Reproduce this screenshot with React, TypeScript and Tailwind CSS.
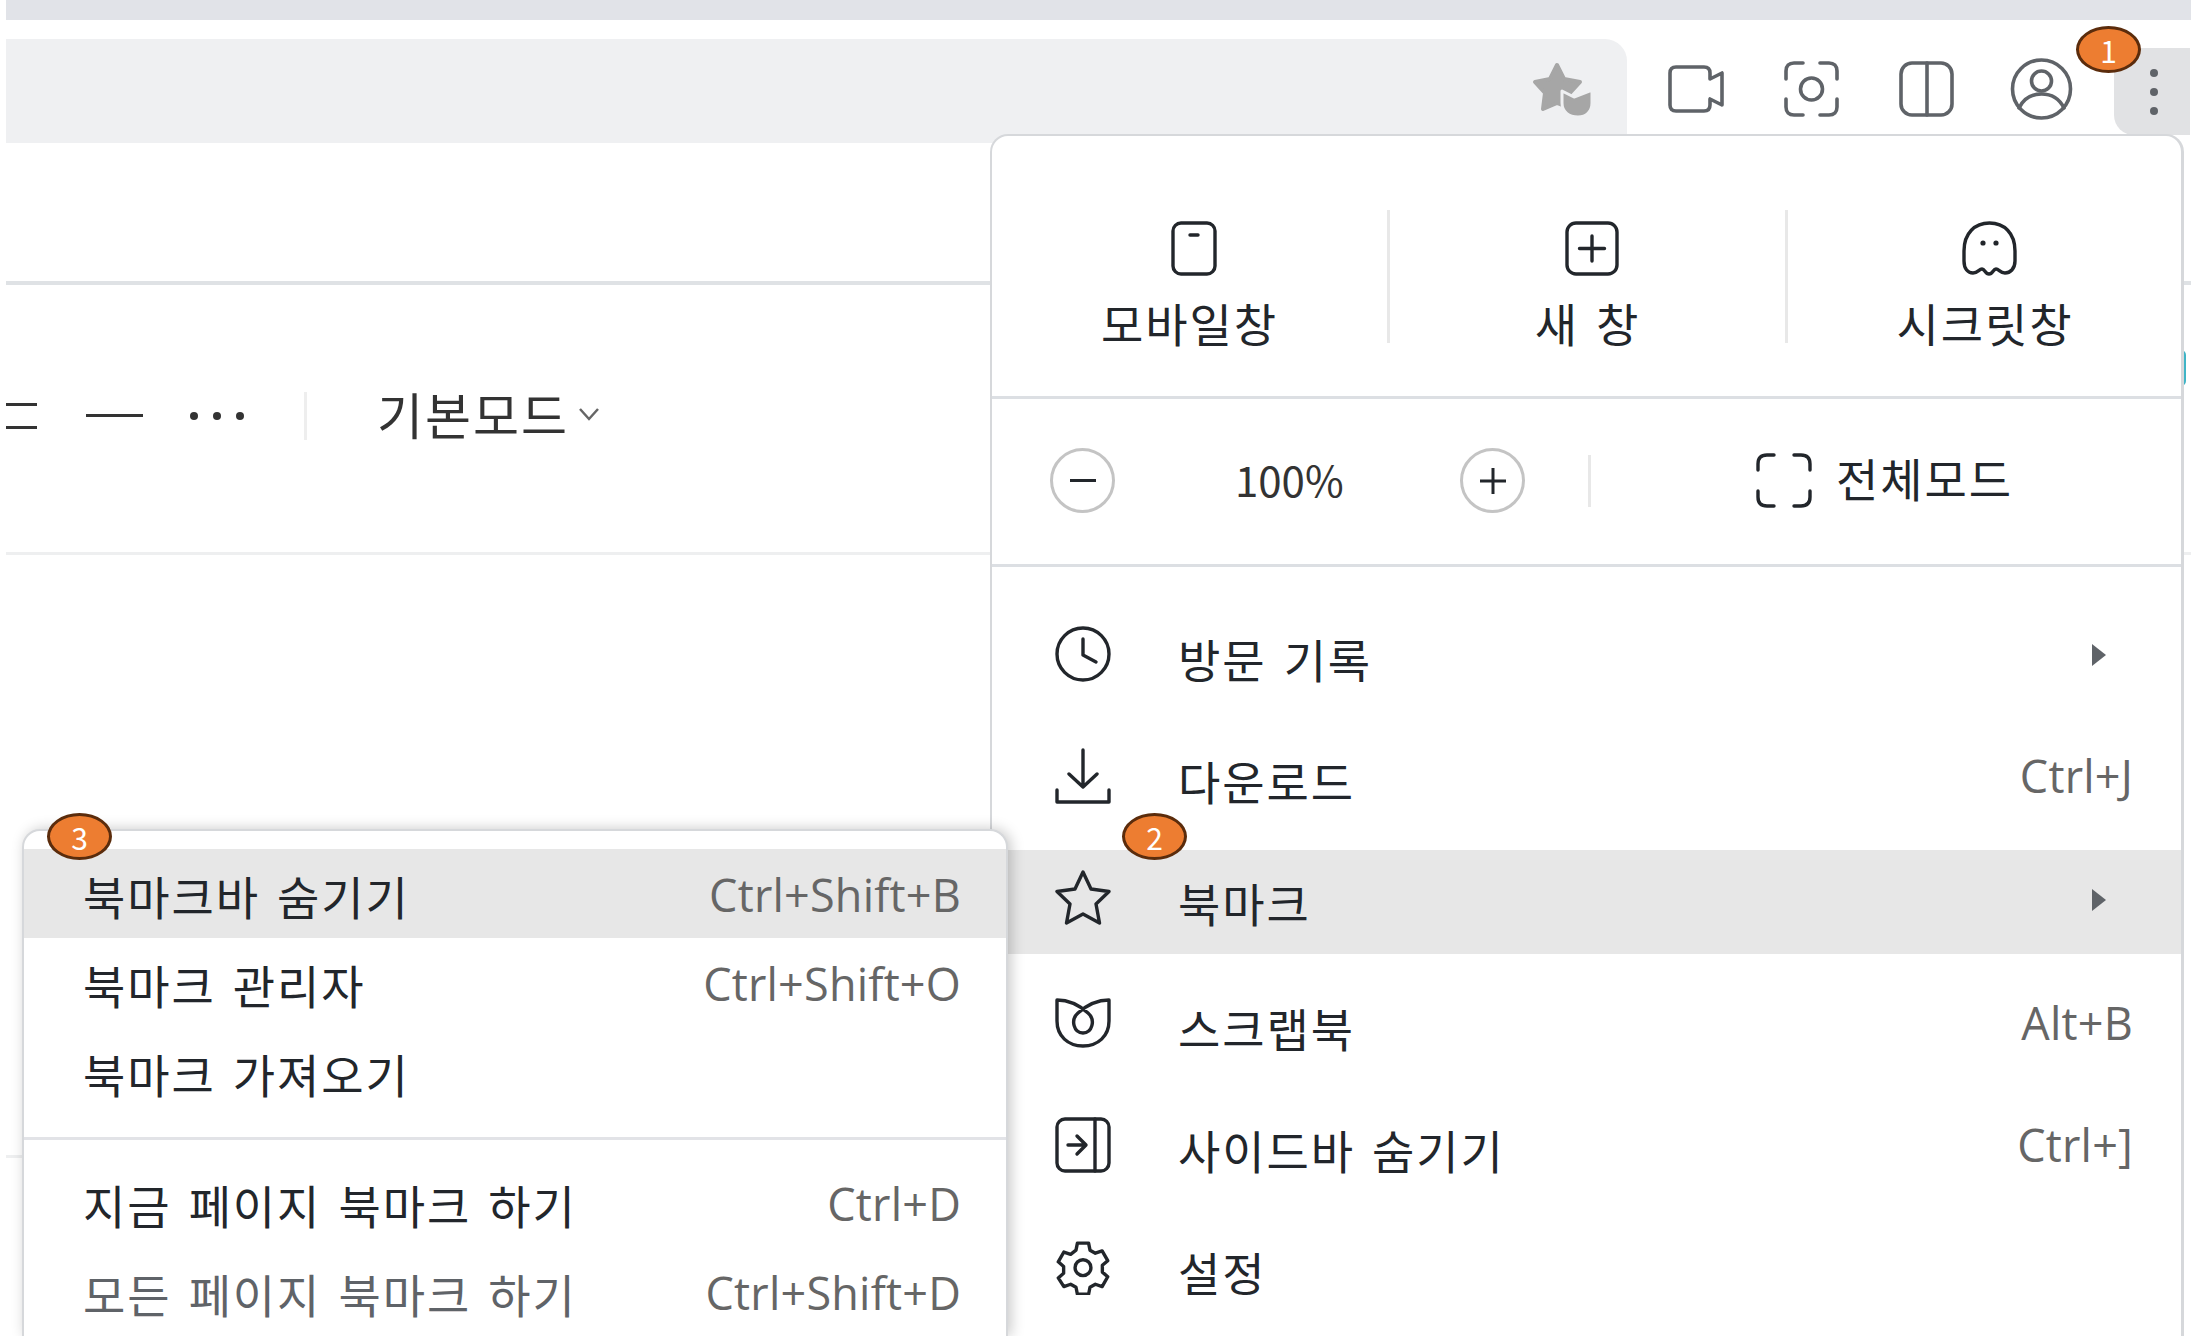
const fontKr = "font-['Noto_Sans_CJK_KR','Noto_Sans',sans-serif]";

// Hangul in the picture runs wider than Noto, so it gets a bit of tracking
const krText = "text-[46px] leading-none tracking-[1.9px] [word-spacing:5px]";
const shortcutText = "font-['Open_Sans'] text-[45px] leading-none tracking-[0.2px] text-[#666]";

const Badge = ({ label, className }: { label: string; className: string }) => (
  <div
    className={`absolute z-30 flex h-[47px] w-[65px] items-center justify-center rounded-[50%] border-[3px] border-[#5b2c0c] bg-[#ed7d31] text-[30px] leading-none text-white ${className}`}
  >
    {label}
  </div>
);

const Arrow = () => (
  <svg width="14" height="22" viewBox="0 0 14 22">
    <path d="M0 0 L14 11 L0 22 Z" fill="#5f6368" />
  </svg>
);

const stroke = {
  fill: "none",
  stroke: "#22262b",
  strokeWidth: 3.4,
  strokeLinecap: "round" as const,
  strokeLinejoin: "round" as const,
};

const toolStroke = { ...stroke, stroke: "#5f6368", strokeWidth: 3.6 };

const StarShield = () => (
  <svg width="62" height="56" viewBox="0 0 62 56">
    <path
      d="M25 3 L32 17 L48 20 L37 32 L38 46 L25 41 L11 47 L13 31 L3 20 L18 17 Z"
      fill="#a6a6a6"
      stroke="#a6a6a6"
      strokeWidth="4"
      strokeLinejoin="round"
    />
    <path
      d="M30 29 L42 35 L60 28 L60 41 C60 50 54 55 46 55 C37 55 30 50 30 41 Z"
      fill="#a6a6a6"
      stroke="#eff0f2"
      strokeWidth="3"
      strokeLinejoin="round"
    />
  </svg>
);

const VideoIcon = () => (
  <svg width="56" height="48" viewBox="0 0 56 48">
    <path
      {...toolStroke}
      d="M8 2 H36 C40 2 42 4 42 8 V14 L54 8 V40 L42 34 V40 C42 44 40 46 36 46 H8 C4 46 2 44 2 40 V8 C2 4 4 2 8 2 Z"
    />
  </svg>
);

const CaptureIcon = () => (
  <svg width="55" height="56" viewBox="0 0 55 56">
    <path
      {...toolStroke}
      d="M2 18 V10 C2 5 5 2 10 2 H19 M36 2 H45 C50 2 53 5 53 10 V18 M53 38 V46 C53 51 50 54 45 54 H36 M19 54 H10 C5 54 2 51 2 46 V38"
    />
    <circle {...toolStroke} cx="27.5" cy="28" r="11" />
  </svg>
);

const SplitIcon = () => (
  <svg width="55" height="56" viewBox="0 0 55 56">
    <rect {...toolStroke} x="2" y="2" width="51" height="52" rx="11" />
    <path {...toolStroke} d="M28 2 V54" />
  </svg>
);

const ProfileIcon = () => (
  <svg width="63" height="62" viewBox="0 0 63 62">
    <circle {...toolStroke} cx="31.5" cy="31" r="29" />
    <circle {...toolStroke} cx="31.5" cy="23" r="10" />
    <path {...toolStroke} d="M9 50 C14 40 22 36 31.5 36 C41 36 49 40 54 50" />
  </svg>
);

const MobileIcon = () => (
  <svg width="46" height="55" viewBox="0 0 46 55">
    <rect {...stroke} x="2" y="2" width="42" height="51" rx="8" />
    <path {...stroke} d="M19 14 H27" />
  </svg>
);

const NewWindowIcon = () => (
  <svg width="54" height="55" viewBox="0 0 54 55">
    <rect {...stroke} x="2" y="2" width="50" height="51" rx="9" />
    <path {...stroke} d="M27 15 V40 M14.5 27.5 H39.5" />
  </svg>
);

const GhostIcon = () => (
  <svg width="55" height="55" viewBox="0 0 55 55">
    <path
      {...stroke}
      d="M2 30 C2 12 13 2 27.5 2 C42 2 53 12 53 30 V40 C53 48 48 52 43 52 C38 52 37 48 34 48 C31 48 31 53 27 53 C23 53 23 48 20 48 C17 48 16 52 11 52 C6 52 2 48 2 40 Z"
    />
    <circle cx="21" cy="22" r="2.6" fill="#22262b" />
    <circle cx="34" cy="22" r="2.6" fill="#22262b" />
  </svg>
);

const MinusCircle = () => (
  <div className="flex h-[65px] w-[65px] items-center justify-center rounded-full border-[3px] border-[#c4c4c4]">
    <span className="h-[3px] w-[26px] bg-[#22262b]" />
  </div>
);

const PlusCircle = () => (
  <div className="flex h-[65px] w-[65px] items-center justify-center rounded-full border-[3px] border-[#c4c4c4]">
    <svg width="26" height="26" viewBox="0 0 26 26">
      <path d="M13 0 V26 M0 13 H26" stroke="#22262b" strokeWidth="3" />
    </svg>
  </div>
);

const FullscreenIcon = () => (
  <svg width="56" height="55" viewBox="0 0 56 55">
    <path
      {...stroke}
      d="M2 17 V11 C2 5 5 2 11 2 H18 M38 2 H45 C51 2 54 5 54 11 V17 M54 38 V44 C54 50 51 53 45 53 H38 M18 53 H11 C5 53 2 50 2 44 V38"
    />
  </svg>
);

const ClockIcon = () => (
  <svg width="56" height="56" viewBox="0 0 56 56">
    <circle {...stroke} cx="28" cy="28" r="26" />
    <path {...stroke} d="M28 13 V29 L41 36" />
  </svg>
);

const DownloadIcon = () => (
  <svg width="56" height="56" viewBox="0 0 56 56">
    <path {...stroke} d="M28 2 V39 M14 26 L28 39 L42 26 M2 42 V54 H54 V42" />
  </svg>
);

const StarIcon = () => (
  <svg width="56" height="56" viewBox="0 0 56 56">
    <path
      {...stroke}
      d="M28 2 L36 19 L54 21.5 L41 34 L44.5 53 L28 44 L11.5 53 L15 34 L2 21.5 L20 19 Z"
    />
  </svg>
);

const ScrapIcon = () => (
  <svg width="56" height="50" viewBox="0 0 56 50">
    <path
      {...stroke}
      d="M2 2 V23 C2 38 13 48 28 48 C43 48 54 38 54 23 V2 C42 2 33 6 23 15 C15 22 19 35 28 35 C37 35 41 22 33 15 C23 6 14 2 2 2 Z"
    />
  </svg>
);

const SidebarIcon = () => (
  <svg width="56" height="56" viewBox="0 0 56 56">
    <rect {...stroke} x="2" y="2" width="52" height="52" rx="8" />
    <path {...stroke} d="M40 2 V54 M13 28 H30 M22 19 L31 28 L22 37" />
  </svg>
);

const GearIcon = () => (
  <svg width="56" height="57" viewBox="0 0 24 24">
    <path
      fill="none"
      stroke="#22262b"
      strokeWidth="1.45"
      strokeLinejoin="round"
      d="M9.6 2h4.8l.6 3 2.3 1.3 2.9-1 2.4 4.2-2.3 2v2.9l2.3 2-2.4 4.2-2.9-1-2.3 1.3-.6 3H9.6l-.6-3-2.3-1.3-2.9 1L1.400 16.900l2.300-2V12l-2.300-2 2.400-4.200 2.900 1L9 5z"
    />
    <circle cx="12" cy="12.5" r="3.400" fill="none" stroke="#22262b" strokeWidth="1.45" />
  </svg>
);

const menuRows = [
  { icon: <ClockIcon />, label: "방문 기록", arrow: true },
  { icon: <DownloadIcon />, label: "다운로드", shortcut: "Ctrl+J" },
  { icon: <StarIcon />, label: "북마크", arrow: true, active: true },
  { icon: <ScrapIcon />, label: "스크랩북", shortcut: "Alt+B" },
  { icon: <SidebarIcon />, label: "사이드바 숨기기", shortcut: "Ctrl+]" },
  { icon: <GearIcon />, label: "설정" },
];

const MainMenu = () => (
  <div className="absolute top-[134px] left-[990px] z-10 h-[1202px] w-[1194px] overflow-hidden rounded-t-[18px] border-t-2 border-r-[3px] border-l-2 border-[#d6d8db] bg-white text-[#22262b]">
    <div className="grid h-[263px] grid-cols-[395px_398px_397px] border-b-[3px] border-[#dcdfe3] pt-[74px]">
      <div className="flex h-[133px] flex-col items-center pt-[11px]">
        <div className="ml-2">
          <MobileIcon />
        </div>
        <span className={`mt-[23px] ${krText}`}>모바일창</span>
      </div>
      <div className="flex h-[133px] flex-col items-center border-l-[3px] border-[#e8e8e8] pt-[11px]">
        <div className="ml-2">
          <NewWindowIcon />
        </div>
        <span className={`mt-[23px] ${krText}`}>새 창</span>
      </div>
      <div className="flex h-[133px] flex-col items-center border-l-[3px] border-[#e8e8e8] pt-[11px]">
        <div className="ml-2">
          <GhostIcon />
        </div>
        <span className={`mt-[23px] ${krText}`}>시크릿창</span>
      </div>
    </div>
    <div className="flex h-[168px] items-center border-b-[3px] border-[#dcdfe3] pb-[2px] pl-[58px]">
      <MinusCircle />
      <span className="mb-[3px] ml-[120px] w-[109px] text-[42px] leading-none text-[#333]">100%</span>
      <div className="ml-[116px]">
        <PlusCircle />
      </div>
      <span className="ml-[63px] h-[52px] w-[3px] bg-[#e8e8e8]" />
      <div className="ml-[165px] flex items-center">
        <FullscreenIcon />
        <span className={`mb-[7px] ml-[24px] ${krText}`}>전체모드</span>
      </div>
    </div>
    <div className="pt-[18px]">
      {menuRows.map((row) => (
        <div
          key={row.label}
          className={`flex h-[104px] items-center pr-[48px] pl-[63px] ${
            row.active ? "mt-[21px] mb-[15px] bg-[#e7e7e7] pb-[5px]" : "mt-[18px]"
          }`}
        >
          <div className="mb-[3px] flex h-[56px] w-[56px] items-center">{row.icon}</div>
          <span className={`ml-[67px] flex-1 pt-[5px] ${krText}`}>{row.label}</span>
          {row.shortcut && <span className={`mb-[3px] ${shortcutText}`}>{row.shortcut}</span>}
          {row.arrow && (
            <div className="mr-[27px]">
              <Arrow />
            </div>
          )}
        </div>
      ))}
    </div>
  </div>
);

const subRows = [
  { label: "북마크바 숨기기", shortcut: "Ctrl+Shift+B", active: true },
  { label: "북마크 관리자", shortcut: "Ctrl+Shift+O" },
  { label: "북마크 가져오기" },
];

const subRows2 = [
  { label: "지금 페이지 북마크 하기", shortcut: "Ctrl+D" },
  { label: "모든 페이지 북마크 하기", shortcut: "Ctrl+Shift+D", muted: true },
];

const SubRow = ({
  label,
  shortcut,
  active,
  muted,
}: {
  label: string;
  shortcut?: string;
  active?: boolean;
  muted?: boolean;
}) => (
  <div className={`flex h-[89px] items-center pr-[45px] pl-[59px] ${active ? "bg-[#e7e7e7]" : ""}`}>
    <span className={`flex-1 pt-[2px] ${krText} ${muted ? "text-[#5f6368]" : "text-[#22262b]"}`}>{label}</span>
    {shortcut && <span className={`pt-[1px] ${shortcutText}`}>{shortcut}</span>}
  </div>
);

const SubMenu = () => (
  <div className="absolute top-[829px] left-[22px] z-20 h-[507px] w-[986px] overflow-hidden rounded-t-[18px] border-t-2 border-r-2 border-l-2 border-[#d6d8db] bg-white pt-[18px] shadow-[3px_0_14px_rgba(0,0,0,0.22)]">
    {subRows.map((row) => (
      <SubRow key={row.label} {...row} />
    ))}
    <div className="mt-[21px] mb-[18px] h-[3px] bg-[#e2e3e7]" />
    {subRows2.map((row) => (
      <SubRow key={row.label} {...row} />
    ))}
  </div>
);

const App = () => (
  <div className={`relative h-[1336px] w-[2191px] overflow-hidden bg-white pl-[6px] ${fontKr}`}>
    <div className="h-[20px] bg-[#e1e3e8]" />

    <div className="mt-[19px] flex h-[104px] items-start">
      <div className="flex h-[104px] w-[1621px] items-start justify-end rounded-tr-[22px] bg-[#eff0f2] pt-[23px] pr-[33px]">
        <StarShield />
      </div>
      <div className="mt-[26px] ml-[41px]">
        <VideoIcon />
      </div>
      <div className="mt-[22px] ml-[60px]">
        <CaptureIcon />
      </div>
      <div className="mt-[22px] ml-[60px]">
        <SplitIcon />
      </div>
      <div className="mt-[19px] ml-[56px]">
        <ProfileIcon />
      </div>
      <div className="mt-[9px] ml-[41px] flex h-[87px] w-[76px] flex-col items-center justify-center gap-[11px] rounded-l-[20px] bg-[#e1e2e4] pl-[3px]">
        <span className="h-[8px] w-[8px] rounded-full bg-[#5f6368]" />
        <span className="h-[8px] w-[8px] rounded-full bg-[#5f6368]" />
        <span className="h-[8px] w-[8px] rounded-full bg-[#5f6368]" />
      </div>
    </div>

    <div className="mt-[138px] h-[4px] bg-[#dfe2e5]" />

    <div className="flex h-[267px] items-center pb-[6px] text-[#333]">
      <div className="flex w-[31px] flex-col gap-[20px]">
        <span className="h-[3px] bg-[#333]" />
        <span className="h-[3px] bg-[#333]" />
      </div>
      <span className="ml-[49px] h-[3px] w-[57px] bg-[#333]" />
      <div className="ml-[47px] flex gap-[15px]">
        <span className="h-[8px] w-[8px] rounded-full bg-[#333]" />
        <span className="h-[8px] w-[8px] rounded-full bg-[#333]" />
        <span className="h-[8px] w-[8px] rounded-full bg-[#333]" />
      </div>
      <span className="ml-[60px] h-[48px] w-[3px] bg-[#eeeeee]" />
      <span className="mb-[6px] ml-[70px] text-[50px] leading-none tracking-[2px]">기본모드</span>
      <svg className="mt-[-4px] ml-[9px]" width="22" height="14" viewBox="0 0 22 14">
        <path d="M2 2 L11 12 L20 2" fill="none" stroke="#666" strokeWidth="2.500" />
      </svg>
    </div>

    <div className="h-[3px] bg-[#eeeff0]" />

    <div className="mt-[600px] h-[3px] w-[20px] bg-[#eeeff0]" />

    <div className="absolute top-[350px] left-[2176px] h-[36px] w-[10px] rounded-full bg-[#3fb4c6]" />

    <MainMenu />
    <SubMenu />

    <Badge label="1" className="top-[26px] left-[2076px]" />
    <Badge label="2" className="top-[813px] left-[1122px]" />
    <Badge label="3" className="top-[813px] left-[47px]" />
  </div>
);

export default App;
